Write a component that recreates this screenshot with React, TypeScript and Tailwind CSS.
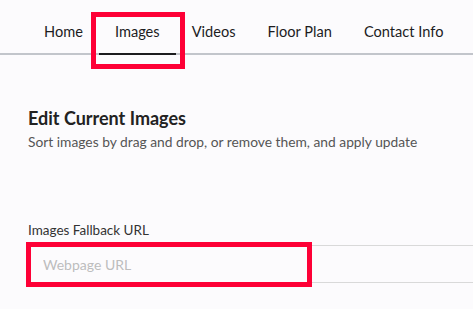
import React from "react";

const tabs = ["Home", "Images", "Videos", "Floor Plan", "Contact Info"];

const App: React.FC = () => {
  const active = "Images";

  return (
    <div
      className="relative w-[473px] h-[309px] overflow-hidden bg-[#fcfbfd] text-[#222]"
      style={{ fontFamily: "Lato, 'Noto Sans', sans-serif" }}
    >
      <nav className="flex h-[55px] border-b-2 border-[#c2c5cb] pl-[28px]">
        {tabs.map((tab) => (
          <button
            key={tab}
            className={
              tab === active
                ? "-mb-[2px] px-4 pt-[22px] pb-[11px] text-[14.6px] leading-[20px] text-[#1d1d1f] border-b-2 border-[#1c1c1e]"
                : "-mb-[2px] px-4 pt-[22px] pb-[11px] text-[14.6px] leading-[20px] text-[#1d1d1f] border-b-2 border-transparent"
            }
          >
            {tab}
          </button>
        ))}
      </nav>

      <section className="pl-[28px]">
        <h2 className="mt-[51px] text-[18px] leading-[24px] font-bold text-[#222]">
          Edit Current Images
        </h2>
        <p className="mt-[2px] text-[13.8px] leading-[20px] text-[#555]">
          Sort images by drag and drop, or remove them, and apply update
        </p>

        <label className="block mt-[69px] text-[13.5px] leading-[18px] text-[#333]">
          Images Fallback URL
        </label>
        <input
          type="text"
          placeholder="Webpage URL"
          className="mt-[6px] block w-full h-[38px] border-y border-[#d9d9d9] bg-transparent pl-[15px] text-[14px] outline-none placeholder:text-[#bdbdbd]"
        />
      </section>

      {/* annotation boxes */}
      <div className="absolute left-[91px] top-[12px] w-[94px] h-[57px] border-[5px] border-[#fe0036]" />
      <div className="absolute left-[26px] top-[242px] w-[286px] h-[45px] border-[5px] border-[#fe0036]" />
    </div>
  );
};

export default App;
